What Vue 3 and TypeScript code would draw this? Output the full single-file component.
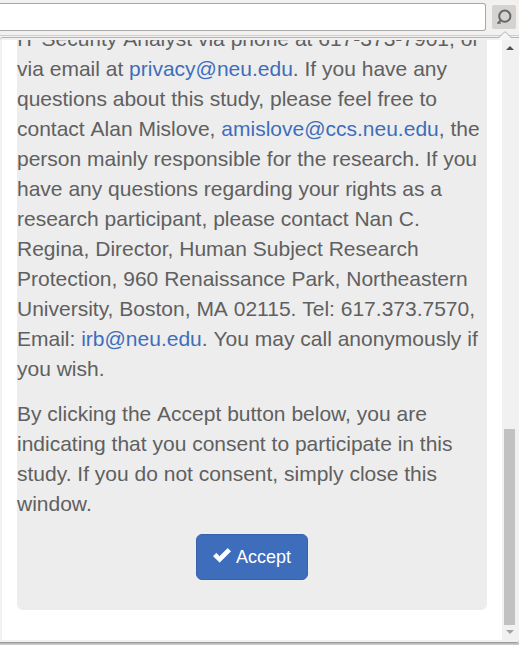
<script setup lang="ts">
interface Part {
  text: string
  link?: boolean
}

const contactLines: Part[][] = [
  [{ text: 'IT Security Analyst via phone at 617-373-7901, or' }],
  [{ text: 'via email at ' }, { text: 'privacy@neu.edu', link: true }, { text: '. If you have any' }],
  [{ text: 'questions about this study, please feel free to' }],
  [{ text: 'contact Alan Mislove, ' }, { text: 'amislove@ccs.neu.edu', link: true }, { text: ', the' }],
  [{ text: 'person mainly responsible for the research. If you' }],
  [{ text: 'have any questions regarding your rights as a' }],
  [{ text: 'research participant, please contact Nan C.' }],
  [{ text: 'Regina, Director, Human Subject Research' }],
  [{ text: 'Protection, 960 Renaissance Park, Northeastern' }],
  [{ text: 'University, Boston, MA 02115. Tel: 617.373.7570,' }],
  [{ text: 'Email: ' }, { text: 'irb@neu.edu', link: true }, { text: '. You may call anonymously if' }],
  [{ text: 'you wish.' }],
]

const consentLines: Part[][] = [
  [{ text: 'By clicking the Accept button below, you are' }],
  [{ text: 'indicating that you consent to participate in this' }],
  [{ text: 'study. If you do not consent, simply close this' }],
  [{ text: 'window.' }],
]

const paragraphs: Part[][][] = [contactLines, consentLines]

// Words and the spaces between them, so that spaces are never kerned.
const tokens = (text: string): string[] => text.split(/( )/).filter((t) => t !== '')
</script>

<template>
  <div class="browser">
    <header class="toolbar">
      <div class="address"></div>
      <div class="extension">
        <svg width="24" height="24" viewBox="0 0 24 24" fill="none" stroke="#666">
          <circle cx="12.8" cy="11.2" r="5.6" stroke-width="2" />
          <path d="M8.9 15.2L6 18.1" stroke-width="2" />
          <path d="M5 18.2H9" stroke-width="1" />
        </svg>
      </div>
    </header>
    <svg class="arrow" width="14" height="9" viewBox="0 0 14 9">
      <path d="M1 7L7 1L13 7V9H1Z" fill="#f5f5f5" />
      <path d="M0.5 6.5L7 0.7L13.5 6.5" fill="none" stroke="#b5b5b5" />
    </svg>
    <section class="popup">
      <main class="viewport">
        <div class="jumbotron">
          <p v-for="(lines, k) in paragraphs" :key="k">
            <span v-for="(line, i) in lines" :key="i" class="line"><component :is="part.link ? 'a' : 'span'" v-for="(part, j) in line" :key="j"><span v-for="(token, n) in tokens(part.text)" :key="n" :class="{ space: token === ' ' }">{{ token }}</span></component></span>
          </p>
          <div class="actions">
            <button class="accept" type="button">
              <svg width="18" height="15" viewBox="0 0 18 15">
                <path d="M0.4 8.2L3.3 5.2L6.6 8.4L14.7 0.4L17.7 3.3L6.7 14.2Z" fill="#fff" stroke="#fff" stroke-width=".7" stroke-linejoin="round" />
              </svg>
              <span>Accept</span>
            </button>
          </div>
        </div>
      </main>
      <aside class="scrollbar">
        <svg class="up" width="8" height="4" viewBox="0 0 8 4"><path d="M0 4L4 0L8 4Z" fill="#505050" /></svg>
        <div class="thumb"></div>
        <svg class="down" width="8" height="4" viewBox="0 0 8 4"><path d="M0 0H8L4 4Z" fill="#a3a3a3" /></svg>
      </aside>
    </section>
    <footer class="edge"></footer>
  </div>
</template>

<style>
body {
  margin: 0;
  overflow: hidden;
}
</style>

<style scoped>
.browser {
  position: relative;
  width: 519px;
  height: 645px;
  overflow: hidden;
  box-sizing: border-box;
  background: #f2f1f0;
  font-family: "Liberation Sans", Arial, sans-serif;
}
.toolbar {
  display: flex;
  box-sizing: border-box;
  height: 37px;
  padding-top: 3px;
  border-bottom: 1px solid #f2f1f0;
  box-shadow: inset 0 -1px #cfcecd;
}
.address {
  box-sizing: border-box;
  width: 486px;
  height: 28px;
  border: 1px solid #aaa7a5;
  border-left: 0;
  border-radius: 0 3px 3px 0;
  background: #fff;
}
.extension {
  width: 24px;
  height: 24px;
  margin: 2px 0 0 6px;
  border-radius: 2px;
  background: #d4d3d2;
}
.extension svg {
  display: block;
}
.arrow {
  position: absolute;
  z-index: 1;
  left: 498px;
  top: 31px;
}
.popup {
  display: flex;
  box-sizing: border-box;
  width: 519px;
  height: 606px;
  padding: 2px;
  border-top: 1px solid #b5b5b5;
  border-top-left-radius: 3px;
  border-bottom: 1px solid #999;
  border-bottom-right-radius: 3px;
  background: #f1f1f1;
}
.viewport {
  display: flex;
  flex-direction: column;
  justify-content: flex-end;
  box-sizing: border-box;
  width: 500px;
  height: 600px;
  padding: 0 15px 30px;
  overflow: hidden;
  background: #fff;
}
.jumbotron {
  flex: none;
  box-sizing: border-box;
  width: 470px;
  padding: 30px 0;
  border-radius: 6px;
  background: #ededed;
}
p {
  margin: 0 0 15px;
  color: #606060;
  font-size: 21px;
  line-height: 30px;
}
.line {
  display: block;
  white-space: pre;
}
.space {
  font-kerning: none;
}
a {
  color: #3e6dbc;
}
.actions {
  display: flex;
  justify-content: center;
}
.accept {
  display: flex;
  align-items: center;
  justify-content: center;
  gap: 5px;
  box-sizing: border-box;
  width: 112px;
  height: 46px;
  padding: 0;
  border: 1px solid #3862a9;
  border-radius: 6px;
  background: #3e6dbb;
  color: #fff;
  font: 18px/24px "Liberation Sans", Arial, sans-serif;
}
.accept svg {
  margin-bottom: 3px;
}
.scrollbar {
  display: flex;
  flex-direction: column;
  align-items: center;
  box-sizing: border-box;
  width: 15px;
  height: 600px;
  padding: 6px 0;
  background: #f1f1f1;
}
.up,
.down {
  flex: none;
  display: block;
}
.thumb {
  width: 11px;
  height: 196px;
  margin: 379px 0 5px;
  background: #c1c1c1;
}
.edge {
  height: 2px;
  background: linear-gradient(#b5b5b5, #d0d0d0);
}
</style>
